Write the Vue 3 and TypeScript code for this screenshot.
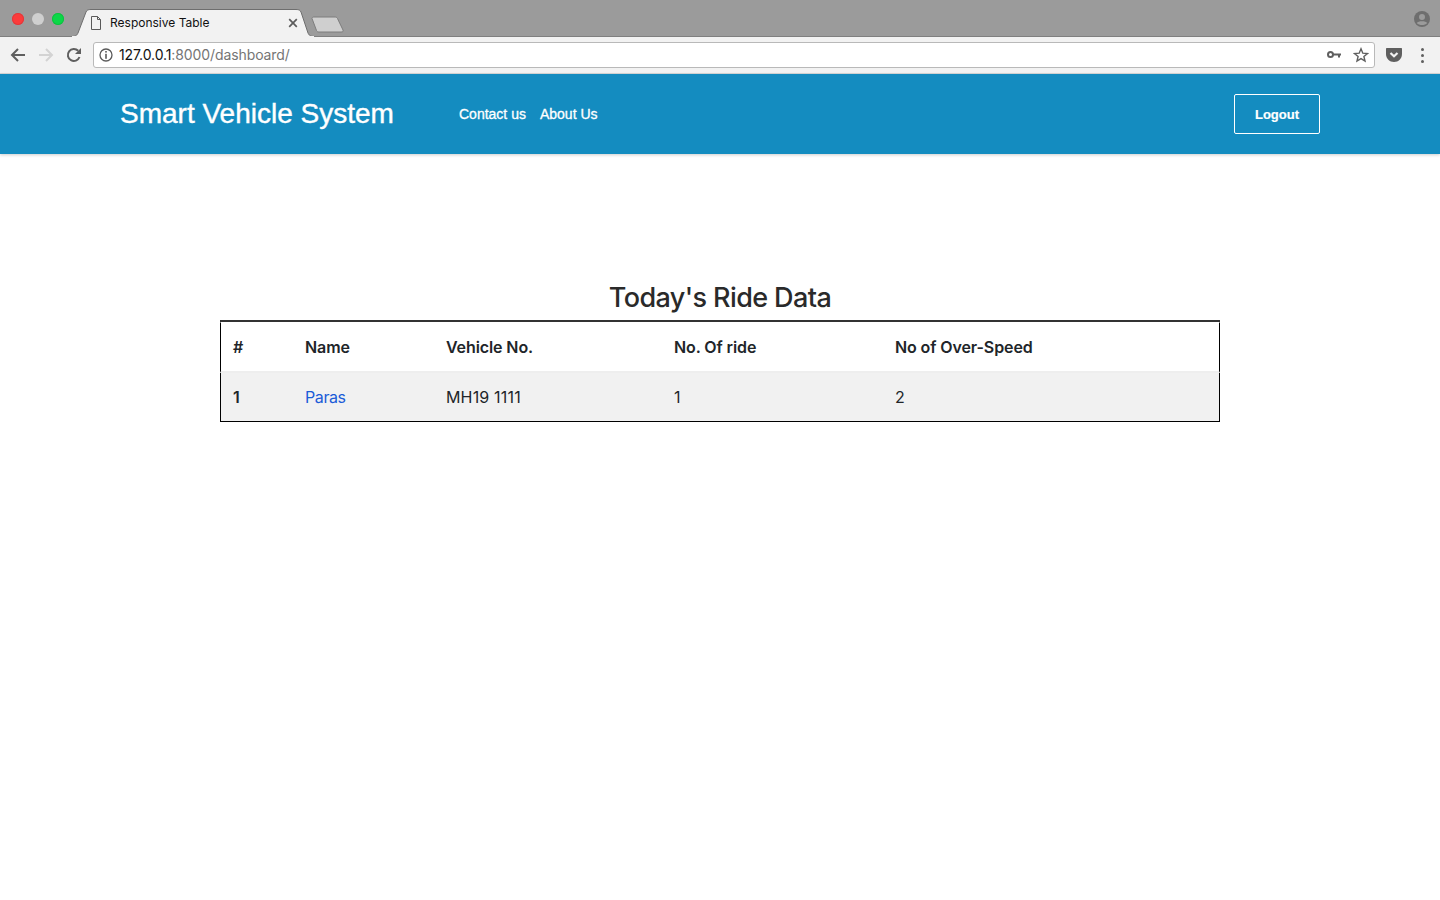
<template>
  <div class="page">
    <div class="tabstrip">
      <div class="lights">
        <span class="light red"></span>
        <span class="light grey"></span>
        <span class="light green"></span>
      </div>
      <div class="tab">
        <svg class="tab-shape" width="242" height="28" viewBox="0 0 242 28">
          <path d="M0 27.5 C4 27.5 5 26 6 24 L14 3 C15 1 16 .5 19 .5 L224 .5 C227 .5 228 1 229 3 L236 24 C237 26 238 27.5 242 27.5 Z" fill="#f2f2f2" stroke="#6e6e6e" />
          <rect x="0" y="27" width="242" height="1" fill="#f2f2f2" />
        </svg>
        <svg class="page-icon" width="12" height="14" viewBox="0 0 12 14">
          <path d="M1.5 .5 H7.5 L10.5 3.5 V13.5 H1.5 Z M7.5 .5 V3.5 H10.5" fill="none" stroke="#5a5a5a" />
        </svg>
        <span class="tab-title">Responsive Table</span>
        <svg class="tab-close" width="10" height="10" viewBox="0 0 10 10">
          <path d="M1.2 1.2 L8.8 8.8 M8.8 1.2 L1.2 8.8" stroke="#5c5c5c" stroke-width="1.7" />
        </svg>
      </div>
      <svg class="new-tab" width="36" height="18" viewBox="0 0 36 18">
        <path d="M2 2.5 C2 1.5 3 1 4 1 L25 1 C26 1 27 1.5 27.5 2.5 L33 14 C33.5 15.5 33 16 31 16 L9 16 C7.5 16 7 15.5 6.5 14.5 Z" fill="#cfcfcf" stroke="#7d7d7d" />
      </svg>
      <svg class="profile" width="16" height="16" viewBox="0 0 16 16">
        <circle cx="8" cy="8" r="8" fill="#6e6e6e" />
        <circle cx="8" cy="6" r="3" fill="#9b9b9b" />
        <path d="M2.8 12 C4 9.8 12 9.8 13.2 12 C12 13.5 10 14 8 14 C6 14 4 13.5 2.8 12 Z" fill="#9b9b9b" />
      </svg>
    </div>

    <div class="toolbar">
      <svg class="nav-icon" width="16" height="16" viewBox="0 0 16 16">
        <path d="M15 8 H2.5 M8 2 L2 8 L8 14" fill="none" stroke="#5f5f5f" stroke-width="2" />
      </svg>
      <svg class="nav-icon" width="16" height="16" viewBox="0 0 16 16">
        <path d="M1 8 H13.5 M8 2 L14 8 L8 14" fill="none" stroke="#d3d3d3" stroke-width="2" />
      </svg>
      <svg class="nav-icon" width="16" height="16" viewBox="0 0 16 16">
        <path d="M13.5 10 A6 6 0 1 1 12.2 3.8" fill="none" stroke="#5f5f5f" stroke-width="2" />
        <path d="M15 1 V7 H9 Z" fill="#5f5f5f" />
      </svg>
      <div class="omnibox">
        <svg class="info-icon" width="14" height="14" viewBox="0 0 14 14">
          <circle cx="7" cy="7" r="6" fill="none" stroke="#5a5a5a" stroke-width="1.3" />
          <rect x="6.2" y="3" width="1.6" height="1.6" fill="#5a5a5a" />
          <rect x="6.2" y="5.8" width="1.6" height="5" fill="#5a5a5a" />
        </svg>
        <span class="url"><span class="host">127.0.0.1</span>:8000/dashboard/</span>
        <svg class="key-icon" width="14" height="8" viewBox="0 0 14 8">
          <circle cx="3.5" cy="3.5" r="2.5" fill="none" stroke="#5f5f5f" stroke-width="2" />
          <path d="M6 2.5 H14 V4.5 H13 V6.5 H11 V4.5 H6 Z" fill="#5f5f5f" />
        </svg>
        <svg class="star-icon" width="16" height="16" viewBox="0 0 16 16">
          <path d="M8 1.8 L9.8 6.2 L14.5 6.5 L10.9 9.5 L12 14.1 L8 11.6 L4 14.1 L5.1 9.5 L1.5 6.5 L6.2 6.2 Z" fill="none" stroke="#5f5f5f" stroke-width="1.4" />
        </svg>
      </div>
      <svg class="pocket" width="16" height="14" viewBox="0 0 16 14">
        <path d="M0 1 C0 .4 .4 0 1 0 H15 C15.6 0 16 .4 16 1 V6 C16 10.5 12.5 14 8 14 C3.5 14 0 10.5 0 6 Z" fill="#5f5f5f" />
        <path d="M4.5 5 L8 8.3 L11.5 5" fill="none" stroke="#f2f2f2" stroke-width="2.2" />
      </svg>
      <div class="menu-dots"><span></span><span></span><span></span></div>
    </div>

    <header class="site-header">
      <a class="brand">Smart Vehicle System</a>
      <nav class="site-nav">
        <a v-for="link in links" :key="link">{{ link }}</a>
      </nav>
      <button class="logout" type="button">Logout</button>
    </header>

    <main class="content">
      <h2 class="title">Today's Ride Data</h2>
      <table class="rides">
        <thead>
          <tr>
            <th v-for="col in columns" :key="col.label" :style="{ width: col.width + 'px' }">{{ col.label }}</th>
          </tr>
        </thead>
        <tbody>
          <tr v-for="(ride, i) in rides" :key="ride.vehicle">
            <th>{{ i + 1 }}</th>
            <td><a class="rider">{{ ride.name }}</a></td>
            <td class="vehicle">{{ ride.vehicle }}</td>
            <td>{{ ride.count }}</td>
            <td>{{ ride.overSpeed }}</td>
          </tr>
        </tbody>
      </table>
    </main>
  </div>
</template>

<script setup lang="ts">
interface Ride {
  name: string;
  vehicle: string;
  count: number;
  overSpeed: number;
}

const links = ['Contact us', 'About Us'];

const columns = [
  { label: '#', width: 73 },
  { label: 'Name', width: 141 },
  { label: 'Vehicle No.', width: 228 },
  { label: 'No. Of ride', width: 221 },
  { label: 'No of Over-Speed', width: 337 },
];

const rides: Ride[] = [{ name: 'Paras', vehicle: 'MH19 1111', count: 1, overSpeed: 2 }];
</script>

<style>
html,
body {
  margin: 0;
  background: #fff;
}
</style>

<style scoped>
.page {
  min-height: 900px;
  font-family: Inter, 'Liberation Sans', sans-serif;
  color: #212529;
}

.tabstrip {
  display: flex;
  align-items: flex-end;
  height: 36px;
  background: #9b9b9b;
  border-bottom: 1px solid #7f7f7f;
  position: relative;
}

.lights {
  display: flex;
  gap: 8px;
  align-self: flex-start;
  margin: 13px 0 0 12px;
}

.light {
  width: 12px;
  height: 12px;
  border-radius: 50%;
}

.red {
  background: #fc3b3b;
  box-shadow: inset 0 0 0 1px #e0393c;
}

.grey {
  background: #cfcfcf;
}

.green {
  background: #0cd748;
  box-shadow: inset 0 0 0 1px #10c040;
}

.tab {
  position: relative;
  display: flex;
  align-items: center;
  width: 242px;
  height: 28px;
  margin: 0 0 -1px 8px;
  padding-left: 20px;
  box-sizing: border-box;
}

.tab-shape {
  position: absolute;
  left: 0;
  top: 0;
}

.page-icon,
.tab-title,
.tab-close {
  position: relative;
}

.page-icon {
  margin-left: -2px;
  margin-right: 8px;
}

.tab-title {
  font-size: 12px;
  line-height: 14px;
  margin-bottom: 1px;
  color: #111;
  width: 178px;
}

.new-tab {
  margin: 0 0 0 -4px;
  position: relative;
  top: -2px;
}

.profile {
  position: absolute;
  right: 10px;
  top: 11px;
}

.toolbar {
  display: flex;
  align-items: center;
  height: 37px;
  background: #f2f2f2;
  padding: 0 16px 0 10px;
  box-sizing: border-box;
  border-bottom: 1px solid #d8d8d8;
}

.nav-icon {
  margin-right: 12px;
}

.omnibox {
  flex: 1;
  display: flex;
  align-items: center;
  height: 26px;
  margin: 0 11px 0 -1px;
  background: #fff;
  border: 1px solid #b9b9b9;
  border-radius: 3px;
  box-sizing: border-box;
  padding: 0 5px;
}

.info-icon {
  margin-right: 6px;
}

.url {
  flex: 1;
  font-size: 14px;
  line-height: 17px;
  margin-bottom: 2px;
  color: #757575;
  letter-spacing: -0.1px;
}

.host {
  color: #111;
}

.key-icon {
  margin-right: 12px;
}

.pocket {
  margin-right: 19px;
}

.menu-dots {
  display: flex;
  flex-direction: column;
  gap: 3px;
}

.menu-dots span {
  width: 3px;
  height: 3px;
  border-radius: 50%;
  background: #5f5f5f;
}

.site-header {
  display: flex;
  align-items: center;
  height: 80px;
  padding: 0 120px;
  background: #148cc0;
  box-shadow: 0 1px 3px rgba(0, 0, 0, 0.2);
  font-family: 'Liberation Sans', Arial, sans-serif;
  color: #fff;
}

.brand {
  font-size: 28px;
  width: 339px;
  -webkit-text-stroke: 0.4px #fff;
}

.site-nav {
  display: flex;
  flex: 1;
  gap: 14px;
  font-size: 14px;
  -webkit-text-stroke: 0.3px #fff;
}

.logout {
  width: 86px;
  height: 40px;
  background: transparent;
  border: 1px solid #fff;
  border-radius: 2px;
  color: #fff;
  font: bold 13px 'Liberation Sans', Arial, sans-serif;
  -webkit-text-stroke: 0.2px #fff;
}

.content {
  width: 1000px;
  margin: 0 auto;
  padding-top: 125px;
}

.title {
  margin: 0;
  height: 41px;
  line-height: 38px;
  text-align: center;
  font-size: 27px;
  font-weight: 500;
  letter-spacing: -0.6px;
  color: #2a2a2a;
}

.rides {
  width: 1000px;
  border-collapse: separate;
  border-spacing: 0;
  table-layout: fixed;
  font-size: 16px;
  letter-spacing: -0.1px;
  border-top: 2px solid #333;
}

.rides th,
.rides td {
  box-sizing: border-box;
  padding: 0 12px;
  text-align: left;
}

.rides thead th {
  border-top: 1px solid #fff;
  border-bottom: 2px solid #eee;
  height: 51px;
  font-weight: 600;
}

.rides tr > :first-child {
  border-left: 1px solid #000;
}

.rides tr > :last-child {
  border-right: 1px solid #000;
}

.rides tbody tr {
  background: #f1f1f1;
}

.rides tbody th,
.rides tbody td {
  height: 49px;
  border-bottom: 1px solid #000;
}

.rides tbody th {
  font-weight: 600;
}

.rides td {
  font-weight: 400;
}

.rides .vehicle {
  letter-spacing: 0.17px;
}

.rider {
  color: #1a5cd8;
  letter-spacing: -0.4px;
}
</style>
